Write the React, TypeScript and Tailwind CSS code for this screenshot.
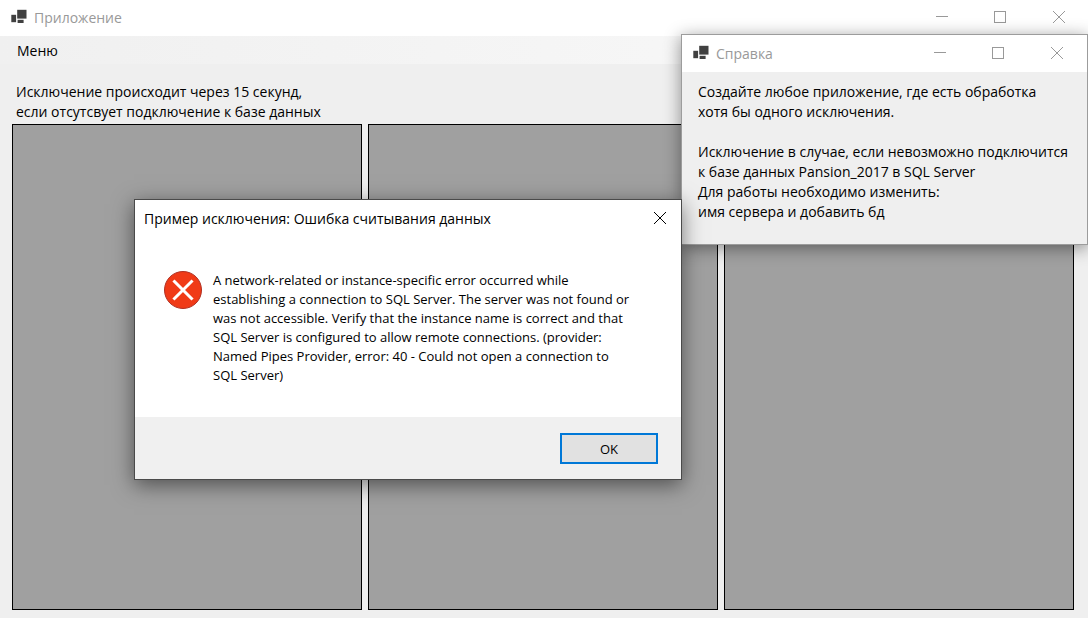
import React from "react";

const panels = ["left", "middle", "right"];

function AppIcon() {
  return (
    <svg width="16" height="16" viewBox="0 0 16 16" className="shrink-0" fill="#404040" aria-hidden="true">
      <rect x="6.2" y="0.8" width="9.3" height="8.8" />
      <rect x="0.3" y="5.8" width="4.8" height="7.4" />
      <rect x="6.6" y="10.8" width="6" height="3.2" />
    </svg>
  );
}

function CloseGlyph() {
  return (
    <svg width="12" height="12" viewBox="0 0 12 12" fill="none" stroke="currentColor" aria-hidden="true">
      <path d="M0 0L12 12M12 0L0 12" />
    </svg>
  );
}

function TitleBar({ title, className }: { title: string; className: string }) {
  return (
    <header className={`flex shrink-0 items-center bg-white pl-[11px] text-[#999999] ${className}`}>
      <AppIcon />
      <h1 className="grow pt-0.5 pl-[7px] text-[14px] leading-5">{title}</h1>
      <button type="button" aria-label="Свернуть" className="flex h-full w-[58px] shrink-0 items-center justify-center">
        <svg width="12" height="12" viewBox="0 0 12 12" stroke="currentColor" aria-hidden="true">
          <path d="M0 5.5H12" />
        </svg>
      </button>
      <button type="button" aria-label="Развернуть" className="flex h-full w-[58px] shrink-0 items-center justify-center">
        <svg width="12" height="12" viewBox="0 0 12 12" fill="none" stroke="currentColor" aria-hidden="true">
          <rect x="0.5" y="0.5" width="11" height="11" />
        </svg>
      </button>
      <button type="button" aria-label="Закрыть" className="flex h-full w-[59px] shrink-0 items-center justify-center pl-px">
        <CloseGlyph />
      </button>
    </header>
  );
}

function HelpWindow() {
  return (
    <section
      aria-label="Справка"
      className="absolute top-[34px] right-0 w-[407px] border border-[#9c9c9c] bg-[#efefef] shadow-[0_3px_16px_rgba(0,0,0,0.42)]"
    >
      <TitleBar title="Справка" className="h-[37px] pr-px pb-px" />
      <div className="px-4 pt-2.5 pb-[22px] text-[14px] leading-5 whitespace-nowrap">
        <p>
          Создайте любое приложение, где есть обработка
          <br />
          хотя бы одного исключения.
        </p>
        <p className="pt-5">
          Исключение в случае, если невозможно подключится
          <br />
          к базе данных Pansion_2017 в SQL Server
          <br />
          Для работы необходимо изменить:
          <br />
          имя сервера и добавить бд
        </p>
      </div>
    </section>
  );
}

function ErrorDialog() {
  return (
    <div
      role="alertdialog"
      aria-labelledby="error-title"
      aria-describedby="error-text"
      className="absolute top-[199px] left-[134px] w-[548px] border border-[#4a4a4a] bg-white shadow-[0_5px_20px_rgba(0,0,0,0.5)]"
    >
      <header className="flex h-9 items-center pl-[9px]">
        <h2 id="error-title" className="grow pt-0.5 text-[14px] leading-5">
          Пример исключения: Ошибка считывания данных
        </h2>
        <button type="button" aria-label="Закрыть" className="flex h-9 w-[42px] items-center justify-center">
          <CloseGlyph />
        </button>
      </header>
      <div className="flex gap-[11px] pt-[35px] pr-10 pb-8 pl-[29px]">
        <svg width="38" height="38" viewBox="0 0 38 38" className="shrink-0" aria-hidden="true">
          <circle cx="19" cy="19" r="18.5" fill="#f03a17" stroke="#b03023" />
          <path d="M10.5 10.5L27.5 27.5M27.5 10.5L10.5 27.5" stroke="#fff" strokeWidth="3" strokeLinecap="square" />
        </svg>
        <p id="error-text" className="text-[13px] leading-[19px] whitespace-nowrap">
          A network-related or instance-specific error occurred while
          <br />
          establishing a connection to SQL Server. The server was not found or
          <br />
          was not accessible. Verify that the instance name is correct and that
          <br />
          SQL Server is configured to allow remote connections. (provider:
          <br />
          Named Pipes Provider, error: 40 - Could not open a connection to
          <br />
          SQL Server)
        </p>
      </div>
      <footer className="flex justify-end bg-[#f0f0f0] px-[23px] pt-4 pb-[15px]">
        <button type="button" className="h-[31px] w-[98px] border-2 border-[#0078d7] bg-[#e1e1e1] text-[13px] leading-5">
          OK
        </button>
      </footer>
    </div>
  );
}

export default function App() {
  return (
    <div className="relative flex min-h-screen flex-col overflow-hidden bg-[#efefef] font-['Open_Sans','Noto_Sans',sans-serif] text-black">
      <TitleBar title="Приложение" className="h-9 pb-0.5" />
      <nav className="flex h-7 shrink-0 items-center bg-linear-to-r from-[#f0f0f0] to-[#fafafa] pl-[11px]">
        <button type="button" className="px-1.5 pt-0.5 text-[14px] leading-5">
          Меню
        </button>
      </nav>
      <main className="flex grow flex-col pt-[18px] pr-3.5 pb-2 pl-3">
        <p className="px-1 text-[14px] leading-5">
          Исключение происходит через 15 секунд,
          <br />
          если отсутсвует подключение к базе данных
        </p>
        <div className="mt-0.5 grid grow grid-cols-3 gap-1.5">
          {panels.map((name) => (
            <div key={name} className="border border-black bg-[#a0a0a0]" />
          ))}
        </div>
      </main>
      <HelpWindow />
      <ErrorDialog />
    </div>
  );
}
